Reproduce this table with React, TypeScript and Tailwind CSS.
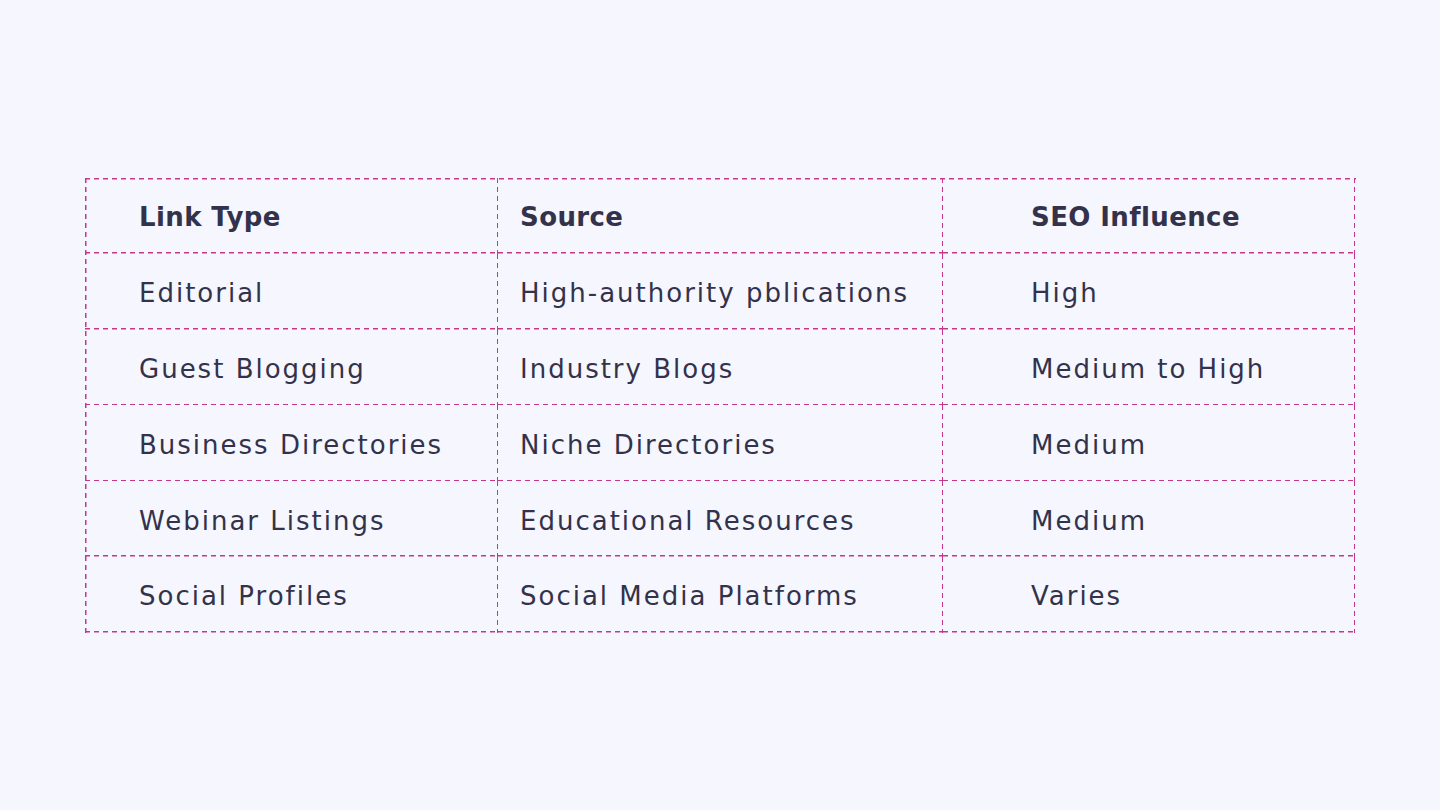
const rows = [
  ["Editorial", "High-authority pblications", "High"],
  ["Guest Blogging", "Industry Blogs", "Medium to High"],
  ["Business Directories", "Niche Directories", "Medium"],
  ["Webinar Listings", "Educational Resources", "Medium"],
  ["Social Profiles", "Social Media Platforms", "Varies"],
]

// dashed right + bottom edges, drawn as gradients so the dash length matches
const cell =
  "flex items-center h-[75.8px] pt-[4px] bg-no-repeat [background-image:repeating-linear-gradient(90deg,#c5378f_0_5px,transparent_5px_9px),repeating-linear-gradient(180deg,#c5378f_0_5px,transparent_5px_9px)] [background-size:100%_1.5px,1.5px_100%] [background-position:left_bottom,right_top]"

const cols = ["pl-[54px]", "pl-[22px]", "pl-[88px]"]

export default function App() {
  return (
    <div
      className="w-[1440px] h-[810px] bg-[#f5f6fe] text-[#33324a] pt-[178px] pl-[85px]"
      style={{ fontFamily: '"DejaVu Sans", "Open Sans", sans-serif' }}
    >
      <div className="grid grid-cols-[413px_445px_412px] w-[1271px] bg-no-repeat [background-image:repeating-linear-gradient(90deg,#c5378f_0_5px,transparent_5px_9px),repeating-linear-gradient(180deg,#c5378f_0_5px,transparent_5px_9px)] [background-size:100%_1.5px,1.5px_100%] [background-position:left_top,left_top]">
        {["Link Type", "Source", "SEO Influence"].map((h, j) => (
          <div key={h} className={`${cell} ${cols[j]} font-bold text-[26px] tracking-[0.4px]`}>
            {h}
          </div>
        ))}
        {rows.map((r, i) =>
          r.map((t, j) => (
            <div key={i + "-" + j} className={`${cell} ${cols[j]} text-[26px] tracking-[2px]`}>
              {t}
            </div>
          )),
        )}
      </div>
    </div>
  )
}
